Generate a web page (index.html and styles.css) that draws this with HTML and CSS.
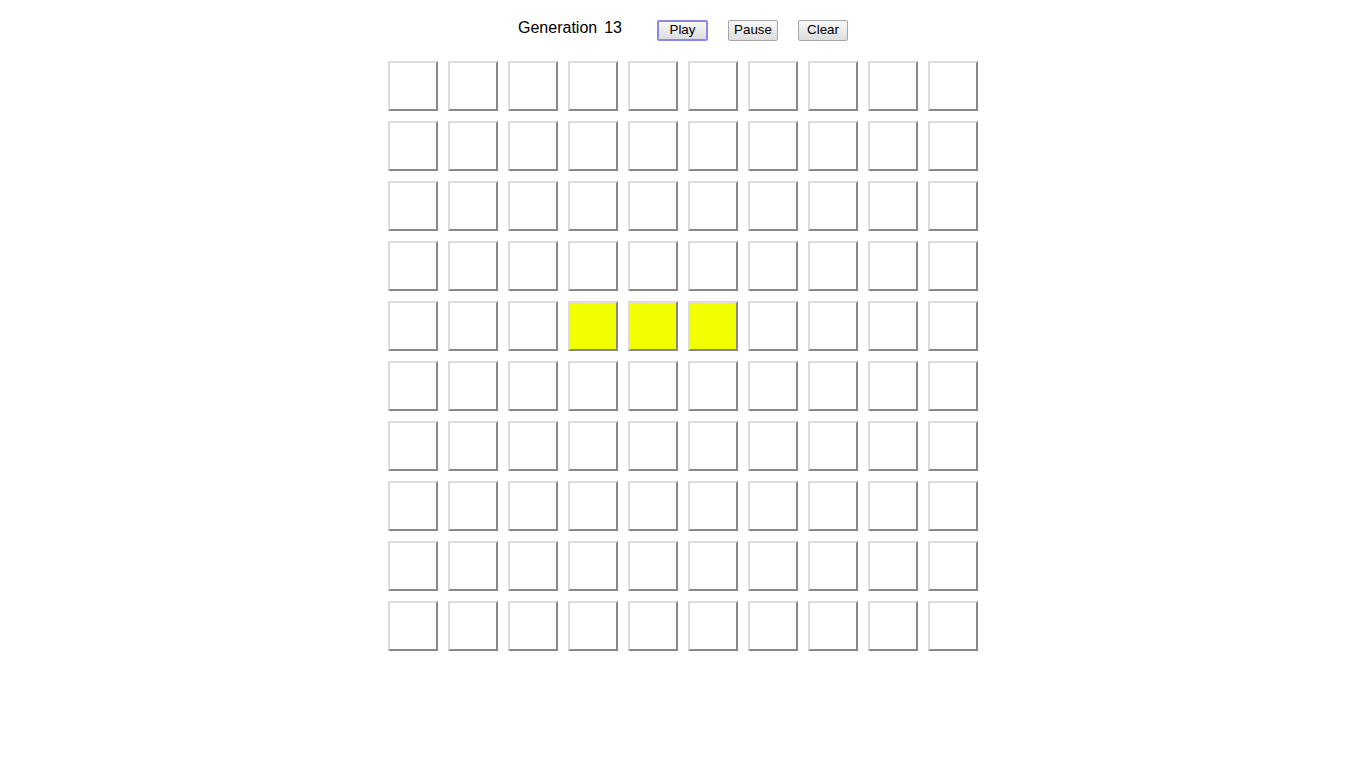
FILE: index.html
```html
<!DOCTYPE html>
<html>
<head>
<meta charset="utf-8">
<title>Game of Life</title>
<link rel="stylesheet" href="styles.css">
</head>
<body>
<div class="bar">
  <div class="gen"><span>Generation</span><span>13</span></div>
  <div class="buttons">
    <button class="btn focused">Play</button>
    <button class="btn">Pause</button>
    <button class="btn">Clear</button>
  </div>
</div>
<div class="grid" id="grid"></div>
<script src="script.js"></script>
</body>
</html>
```
FILE: styles.css
```css
html, body {
  margin: 0;
  padding: 0;
  background: #fff;
  font-family: "Liberation Sans", Arial, sans-serif;
  color: #000;
}
.bar {
  display: flex;
  justify-content: center;
  align-items: flex-start;
  padding-top: 19px;
  gap: 35px;
}
.gen {
  display: flex;
  gap: 7px;
  font-size: 16px;
  line-height: 18px;
}
.buttons {
  display: flex;
  gap: 20px;
  margin-top: 1px;
}
.btn {
  box-sizing: border-box;
  width: 50px;
  height: 21px;
  padding: 0 0 2px 0;
  font-family: "Liberation Sans", Arial, sans-serif;
  font-size: 13.333px;
  color: #000;
  border: 1px solid #a6a6a6;
  border-radius: 2px;
  background: linear-gradient(#f8f8f8, #dddddd);
}
.btn.focused {
  width: 51px;
  border: 2px solid #8b86e8;
}
.grid {
  display: grid;
  grid-template-columns: repeat(10, 50px);
  grid-auto-rows: 50px;
  gap: 10px;
  justify-content: center;
  margin-top: 20px;
}
.cell {
  box-sizing: border-box;
  width: 50px;
  height: 50px;
  border: 2px solid;
  border-color: #dcdcdc #888888 #888888 #dcdcdc;
  background: #fff;
}
.cell.alive {
  background: #f2ff00;
}
```
FILE: script.js
```js
var grid = document.getElementById('grid');
for (var r = 0; r < 10; r++) {
  for (var c = 0; c < 10; c++) {
    var d = document.createElement('div');
    d.className = 'cell';
    if (r === 4 && c >= 3 && c <= 5) d.className += ' alive';
    grid.appendChild(d);
  }
}
```
